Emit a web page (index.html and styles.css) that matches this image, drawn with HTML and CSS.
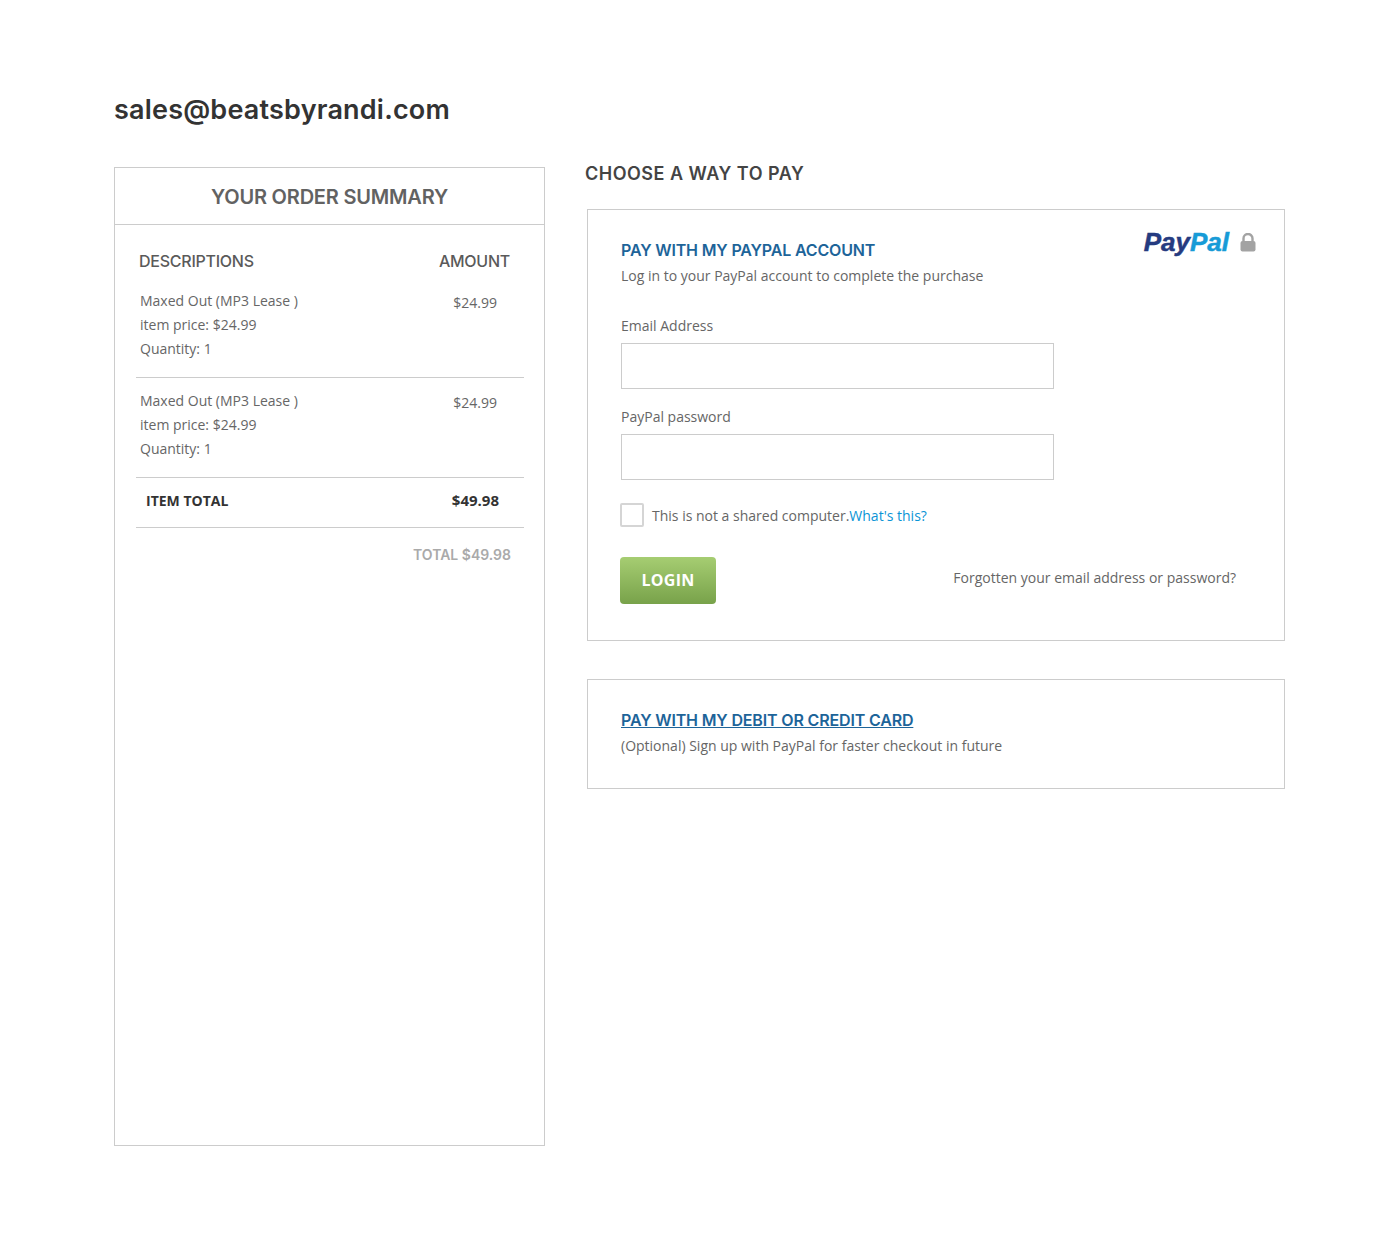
FILE: index.html
```html
<!DOCTYPE html>
<html>
<head>
  <title>Checkout</title>
  <link rel="stylesheet" href="styles.css">
</head>
<body>
  <div class="page">
    <h1 class="seller">sales@beatsbyrandi.com</h1>

    <div class="columns">
      <!-- Order summary -->
      <div class="summary">
        <h2 class="summary-title">YOUR ORDER SUMMARY</h2>
        <div class="summary-head">
          <span>DESCRIPTIONS</span>
          <span>AMOUNT</span>
        </div>

        <div class="item">
          <div class="item-info">
            <p>Maxed Out (MP3 Lease )</p>
            <p>item price: $24.99</p>
            <p>Quantity: 1</p>
          </div>
          <div class="item-price">$24.99</div>
        </div>

        <div class="item">
          <div class="item-info">
            <p>Maxed Out (MP3 Lease )</p>
            <p>item price: $24.99</p>
            <p>Quantity: 1</p>
          </div>
          <div class="item-price">$24.99</div>
        </div>

        <div class="item-total">
          <span>ITEM TOTAL</span>
          <span class="item-total-value">$49.98</span>
        </div>
        <div class="grand-total">TOTAL $49.98</div>
      </div>

      <!-- Payment options -->
      <div class="payment">
        <h2 class="payment-title">CHOOSE A WAY TO PAY</h2>

        <div class="panel panel-login">
          <div class="badge">
            <span class="logo"><span class="logo-pay">Pay</span><span class="logo-pal">Pal</span></span>
            <svg class="lock" width="16" height="19" viewBox="0 0 16 19">
              <path d="M3.5 8V5.5a4.5 4.5 0 0 1 9 0V8" fill="none" stroke="#a3a3a3" stroke-width="2.4"/>
              <rect x="0.5" y="8" width="15" height="10.5" rx="2" fill="#a3a3a3"/>
            </svg>
          </div>

          <h3 class="panel-title">PAY WITH MY PAYPAL ACCOUNT</h3>
          <p class="panel-text">Log in to your PayPal account to complete the purchase</p>

          <form>
            <label class="field-label">Email Address</label>
            <input class="field" type="text">
            <label class="field-label">PayPal password</label>
            <input class="field" type="password">

            <div class="remember">
              <span class="checkbox"></span>
              <span class="remember-text">This is not a shared computer.<a href="#">What's this?</a></span>
            </div>

            <div class="actions">
              <button class="login" type="button">LOGIN</button>
              <a class="forgot" href="#">Forgotten your email address or password?</a>
            </div>
          </form>
        </div>

        <div class="panel panel-card">
          <h3 class="panel-title"><a href="#">PAY WITH MY DEBIT OR CREDIT CARD</a></h3>
          <p class="panel-text">(Optional) Sign up with PayPal for faster checkout in future</p>
        </div>
      </div>
    </div>
  </div>
</body>
</html>
```

FILE: styles.css
```css
body {
  margin: 0;
  background-color: white;
  font-family: 'Open Sans', sans-serif;
  font-size: 14px;
  color: #666;
}

p, h1, h2, h3 {
  margin: 0;
}

a {
  text-decoration: none;
}

.page {
  width: 1171px;
  padding: 91px 0 0 114px;
}

.seller {
  font-family: Inter, sans-serif;
  font-size: 27px;
  font-weight: 600;
  line-height: 38px;
  letter-spacing: 0.2px;
  color: #333;
  margin-bottom: 38px;
}

.columns {
  display: flex;
  gap: 40px;
}

/* Order summary */
.summary {
  width: 431px;
  height: 979px;
  box-sizing: border-box;
  border: 1px solid #ccc;
}

.summary-title {
  font-family: Inter, sans-serif;
  font-size: 20px;
  font-weight: 600;
  line-height: 58px;
  letter-spacing: -0.2px;
  text-align: center;
  color: #626262;
  border-bottom: 1px solid #ccc;
  height: 56px;
}

.summary-head {
  display: flex;
  justify-content: space-between;
  font-family: Inter, sans-serif;
  font-size: 16px;
  font-weight: 500;
  letter-spacing: -0.25px;
  color: #5a5a5a;
  line-height: 24px;
  padding: 24px 34px 12px 24px;
}

.item {
  display: flex;
  justify-content: space-between;
  margin: 0 20px 0 21px;
  padding: 4px 27px 16px 4px;
  border-bottom: 1px solid #ccc;
}

.item + .item {
  padding-top: 11px;
}

.item-info p {
  line-height: 24px;
}

.item-price {
  line-height: 24px;
  padding-top: 2px;
}

.item-total {
  display: flex;
  justify-content: space-between;
  align-items: center;
  height: 49px;
  margin: 0 20px 0 21px;
  padding: 0 25px 0 10px;
  border-bottom: 1px solid #ccc;
  font-weight: 700;
  color: #333;
}

.item-total span {
  margin-bottom: 5px;
}

.item-total-value {
  font-size: 15px;
}

.grand-total {
  font-family: Inter, sans-serif;
  font-size: 14px;
  font-weight: 600;
  color: #aaa;
  text-align: right;
  line-height: 22px;
  padding: 16px 33px 0 0;
}

/* Payment options */
.payment {
  width: 700px;
}

.payment-title {
  font-family: Inter, sans-serif;
  font-size: 18px;
  font-weight: 600;
  line-height: 24px;
  letter-spacing: 0.5px;
  color: #444;
  margin: -5px 0 23px;
}

.panel {
  position: relative;
  margin-left: 2px;
  width: 698px;
  box-sizing: border-box;
  border: 1px solid #ccc;
  padding: 28px 33px 0;
}

.panel-login {
  height: 432px;
  margin-bottom: 38px;
}

.panel-card {
  height: 110px;
}

.panel-title {
  font-family: Inter, sans-serif;
  font-size: 16px;
  font-weight: 600;
  line-height: 24px;
  letter-spacing: -0.16px;
  color: #1d6499;
}

.panel-title a {
  color: #1d6499;
  text-decoration: underline;
}

.panel-text {
  line-height: 24px;
  margin-top: 2px;
}

.badge {
  position: absolute;
  top: 18px;
  right: 28px;
  display: flex;
  align-items: center;
  gap: 11px;
}

.logo {
  font-family: 'Liberation Sans', sans-serif;
  font-size: 26px;
  font-weight: 700;
  font-style: italic;
  line-height: 28px;
  -webkit-text-stroke: 0.5px;
}

.logo-pay {
  color: #253b80;
}

.logo-pal {
  color: #179bd7;
}

.field-label {
  display: block;
  line-height: 24px;
}

form .field-label:first-child {
  margin-top: 26px;
}

.field {
  display: block;
  width: 433px;
  height: 46px;
  box-sizing: border-box;
  border: 1px solid #ccc;
  margin: 5px 0 16px;
  padding: 0 10px;
  background: white;
}

.remember {
  display: flex;
  align-items: center;
  gap: 8px;
  margin: 22px 0 0 -1px;
  line-height: 24px;
}

.remember-text {
  padding-top: 2px;
}

.remember a {
  color: #0a94d6;
}

.checkbox {
  width: 24px;
  height: 24px;
  box-sizing: border-box;
  border: 2px solid #d5d5d5;
  border-radius: 2px;
}

.actions {
  display: flex;
  justify-content: space-between;
  margin: 29px 15px 0 -1px;
}

.login {
  width: 96px;
  height: 47px;
  border: none;
  border-radius: 4px;
  padding: 0 0 2px;
  background: linear-gradient(#a6cd72, #78a24a);
  color: white;
  font-family: 'Open Sans', sans-serif;
  font-size: 16px;
  font-weight: 700;
  letter-spacing: 0.3px;
}

.forgot {
  color: #666;
  line-height: 24px;
  margin-top: 9px;
}
```
